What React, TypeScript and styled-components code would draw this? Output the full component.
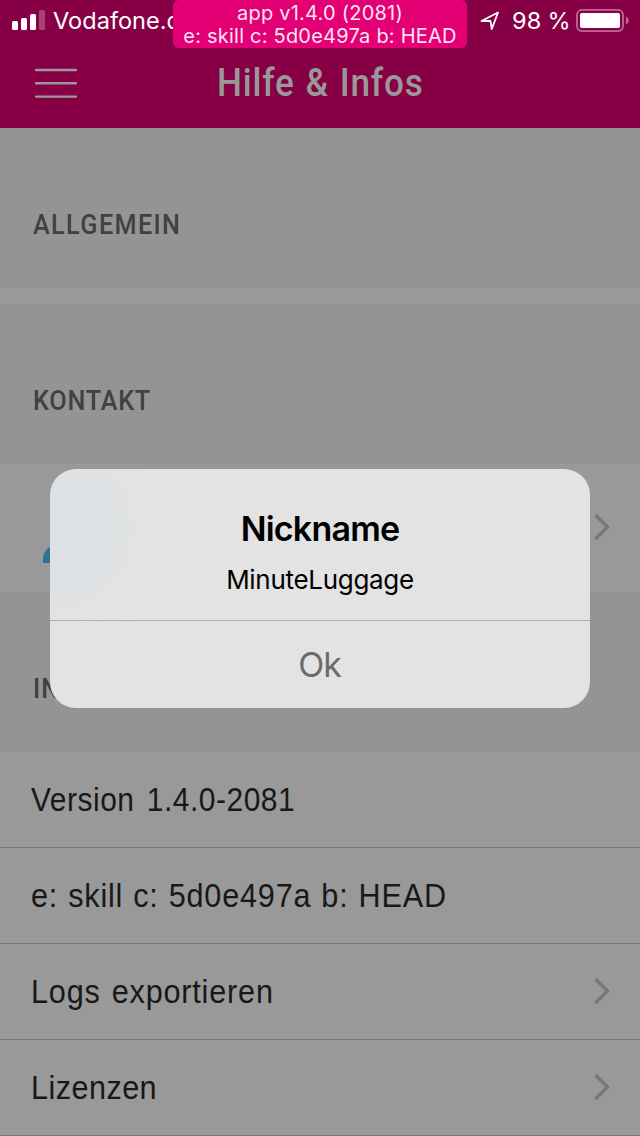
import React from "react";
import styled, { createGlobalStyle } from "styled-components";

const GlobalStyle = createGlobalStyle`
  * { box-sizing: border-box; }
  body { margin: 0; background: #999999; }
`;

const Screen = styled.div`
  position: relative;
  width: 640px;
  height: 1136px;
  overflow: hidden;
  background: #999999;
  font-family: "Liberation Sans", Arial, sans-serif;
`;

const Header = styled.header`
  height: 128px;
  background: #870045;
`;

const StatusBar = styled.div`
  height: 40px;
  display: flex;
  align-items: center;
  justify-content: space-between;
  padding: 0 11px 0 12px;
  color: #ffffff;
  font-family: Inter, sans-serif;
  font-size: 24px;
  line-height: 40px;
`;

const StatusGroup = styled.div`
  display: flex;
  align-items: center;
  white-space: pre;
`;

const Carrier = styled.span`
  margin-left: 8px;
  padding-top: 2px;
  font-size: 23.5px;
  letter-spacing: 0.05px;
`;

const Percent = styled.span`
  margin: 0 5px 0 12px;
  padding-top: 2px;
  font-size: 23.5px;
  letter-spacing: 0.3px;
  word-spacing: -1px;
`;

const NavBar = styled.div`
  height: 88px;
  display: grid;
  grid-template-columns: 112px 1fr 112px;
  padding-top: 20px;
`;

const MenuButton = styled.button`
  width: 43px;
  height: 46px;
  margin-left: 34px;
  padding: 0;
  border: 0;
  background: none;
`;

const Condensed = styled.span<{ $scale: number; $spacing: number; $word?: number }>`
  display: inline-block;
  white-space: pre;
  transform: scaleX(${(p) => p.$scale});
  transform-origin: left center;
  letter-spacing: ${(p) => p.$spacing}px;
  word-spacing: ${(p) => p.$word ?? 0}px;
`;

const Title = styled.h1`
  margin: 0;
  padding-left: 105px;
  font-family: Roboto, sans-serif;
  font-size: 39px;
  font-weight: 500;
  line-height: 46px;
  color: #999999;
  white-space: nowrap;
`;

const SectionHeader = styled.h2`
  margin: 0;
  height: 160px;
  padding: 80px 0 0 32.5px;
  background: #949494;
  color: #414141;
  font-family: Roboto, sans-serif;
  font-size: 28px;
  font-weight: 500;
  line-height: 34px;
`;

const Gap = styled.div`
  height: 16px;
`;

const Row = styled.div<{ $tall?: boolean }>`
  height: ${(p) => (p.$tall ? 128 : 96)}px;
  display: flex;
  align-items: center;
  justify-content: space-between;
  padding: 0 30px 2px 31px;
  border-bottom: ${(p) => (p.$tall ? "0" : "1px solid #777777")};
  color: #181818;
  font-size: 34px;
  line-height: 40px;
`;

const BuildTag = styled.div`
  position: absolute;
  top: 0;
  left: 173px;
  width: 294px;
  height: 48px;
  padding-top: 2px;
  border-radius: 6px;
  background: #e20074;
  color: #ffe4f2;
  font-family: Inter, sans-serif;
  font-size: 20px;
  line-height: 23px;
  letter-spacing: 0.22px;
  text-align: center;
  white-space: nowrap;
`;

const Alert = styled.div`
  position: absolute;
  top: 469px;
  left: 50px;
  width: 540px;
  height: 239px;
  border-radius: 26px;
  overflow: hidden;
  background: radial-gradient(circle at 0 60px, #dbe1e5 0, #dfe2e4 60px, #e3e3e3 120px);
  color: #000000;
  font-family: Inter, sans-serif;
  text-align: center;
`;

const AlertBody = styled.div`
  height: 152px;
  padding-top: 38px;
  border-bottom: 1px solid #adadad;
`;

const AlertTitle = styled.div`
  font-size: 34px;
  font-weight: 600;
  line-height: 44px;
  letter-spacing: -0.8px;
`;

const AlertMessage = styled.div`
  margin-top: 12px;
  font-size: 26px;
  line-height: 34px;
  letter-spacing: -0.3px;
`;

const AlertAction = styled.button`
  display: block;
  width: 100%;
  height: 87px;
  padding: 0 1px 0 0;
  border: 0;
  background: none;
  color: #6b6b6b;
  font-family: inherit;
  font-size: 34px;
  line-height: 87px;
  letter-spacing: -1.2px;
`;

const Chevron = () => (
  <svg width="17" height="28" viewBox="0 0 17 28" fill="none" stroke="#77777a" strokeWidth="3.4">
    <path d="M2.5 2 L14.5 14 L2.5 26" />
  </svg>
);

const Signal = () => (
  <svg width="33" height="20" viewBox="0 0 33 20" fill="#fff">
    <rect x="0" y="11" width="6" height="9" rx="1.5" />
    <rect x="9" y="8" width="6" height="12" rx="1.5" />
    <rect x="18" y="4" width="6" height="16" rx="1.5" />
    <rect x="27" y="0" width="6" height="20" rx="1.5" opacity="0.26" />
  </svg>
);

const LocationArrow = () => (
  <svg width="20" height="20" viewBox="0 0 20 20" fill="none" stroke="#fff" strokeWidth="1.8" strokeLinejoin="round">
    <path d="M1.5 11 L18 2.5 L11.8 19 L10.4 10.8 Z" />
  </svg>
);

const Battery = () => (
  <svg width="53" height="24" viewBox="0 0 53 24">
    <rect x="1" y="1.9" width="46" height="21.2" rx="5" fill="none" stroke="#fff" strokeWidth="1.8" opacity="0.42" />
    <rect x="4" y="5" width="40" height="15" rx="1.8" fill="#fff" />
    <path d="M50 8.5 C53.5 10 53.5 15 50 16.5 Z" fill="#fff" opacity="0.42" />
  </svg>
);

const ContactIcon = () => (
  <svg width="48" height="24" viewBox="0 0 48 24">
    <path d="M0 24 V20 Q0 12 8 7 L19 2 H29 L40 7 Q48 12 48 20 V24 Z" fill="#317197" />
  </svg>
);

const IconSlot = styled.span`
  display: flex;
  margin: 48px 0 0 12px;
`;

export default function App() {
  return (
    <Screen>
      <GlobalStyle />
      <Header>
        <StatusBar>
          <StatusGroup>
            <Signal />
            <Carrier>Vodafone.de</Carrier>
          </StatusGroup>
          <StatusGroup>
            <LocationArrow />
            <Percent>98 %</Percent>
            <Battery />
          </StatusGroup>
        </StatusBar>
        <NavBar>
          <MenuButton aria-label="Menü">
            <svg width="43" height="46" viewBox="0 0 43 46" stroke="#999" strokeWidth="2.4" strokeLinecap="round">
              <path d="M2 10 H42 M2 23.3 H42 M2 36.6 H42" />
            </svg>
          </MenuButton>
          <Title>
            <Condensed $scale={0.9} $spacing={0.9} $word={1.5}>Hilfe &amp; Infos</Condensed>
          </Title>
        </NavBar>
      </Header>

      <SectionHeader>
        <Condensed $scale={0.9} $spacing={1.55}>ALLGEMEIN</Condensed>
      </SectionHeader>
      <Gap />
      <SectionHeader>
        <Condensed $scale={0.9} $spacing={0.85}>KONTAKT</Condensed>
      </SectionHeader>
      <Row $tall>
        <IconSlot>
          <ContactIcon />
        </IconSlot>
        <Chevron />
      </Row>
      <SectionHeader>
        <Condensed $scale={0.9} $spacing={1.2}>INFOS</Condensed>
      </SectionHeader>
      <Row>
        <Condensed $scale={0.88} $spacing={0.6} $word={4}>Version 1.4.0-2081</Condensed>
      </Row>
      <Row>
        <Condensed $scale={0.9} $spacing={0.9} $word={0.8}>e: skill c: 5d0e497a b: HEAD</Condensed>
      </Row>
      <Row>
        <Condensed $scale={0.9} $spacing={0.9} $word={2}>Logs exportieren</Condensed>
        <Chevron />
      </Row>
      <Row>
        <Condensed $scale={0.9} $spacing={0.5}>Lizenzen</Condensed>
        <Chevron />
      </Row>

      <BuildTag>
        <div>app v1.4.0 (2081)</div>
        <div>e: skill c: 5d0e497a b: HEAD</div>
      </BuildTag>

      <Alert role="alertdialog">
        <AlertBody>
          <AlertTitle>Nickname</AlertTitle>
          <AlertMessage>MinuteLuggage</AlertMessage>
        </AlertBody>
        <AlertAction>Ok</AlertAction>
      </Alert>
    </Screen>
  );
}
